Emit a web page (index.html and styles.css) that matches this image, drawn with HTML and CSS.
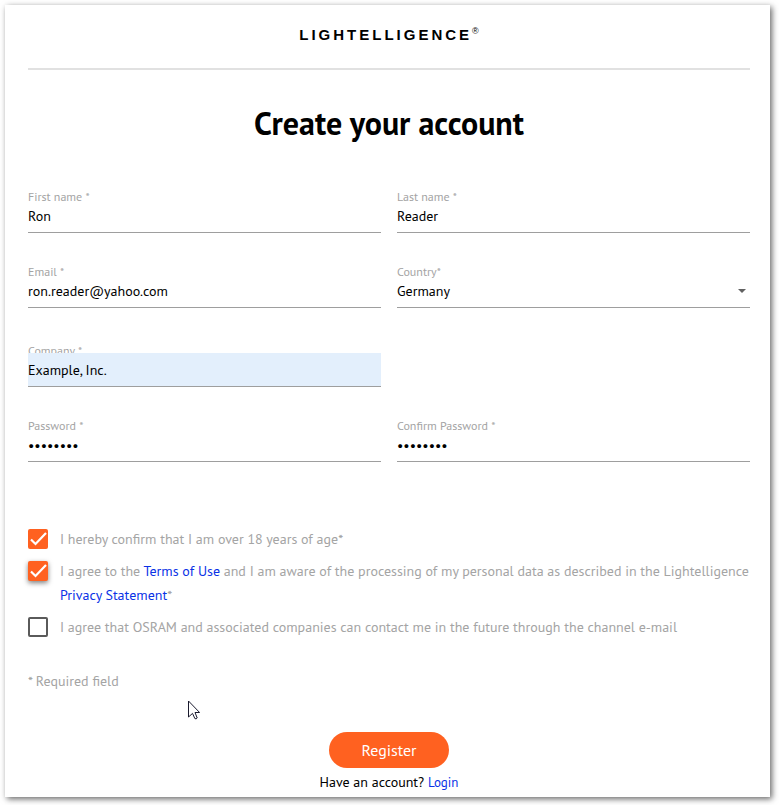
FILE: index.html
```html
<!DOCTYPE html>
<html lang="en">
<head>
<meta charset="utf-8">
<title>Create your account</title>
<meta name="viewport" content="width=device-width, initial-scale=1">
<link rel="stylesheet" href="styles.css">
</head>
<body>
<main class="card">
  <header class="header">
    <div class="logo">LIGHTELLIGENCE<sup class="logo-mark">®</sup></div>
  </header>
  <h1 class="title">Create your account</h1>
  <form class="form">
    <div class="fields">
      <div class="field">
        <label class="label" for="first">First name *</label>
        <input class="control" id="first" type="text" value="Ron">
      </div>
      <div class="field">
        <label class="label" for="last">Last name *</label>
        <input class="control" id="last" type="text" value="Reader">
      </div>
      <div class="field">
        <label class="label" for="email">Email *</label>
        <input class="control" id="email" type="email" value="ron.reader@yahoo.com">
      </div>
      <div class="field">
        <label class="label" for="country">Country*</label>
        <div class="select">
          <select class="control" id="country"><option>Germany</option></select>
          <svg class="arrow" viewBox="0 0 8 4" aria-hidden="true"><path d="M0 0h8L4 4z"/></svg>
        </div>
      </div>
      <div class="field field-company">
        <label class="label" for="company">Company *</label>
        <input class="control control-filled" id="company" type="text" value="Example, Inc.">
      </div>
      <div class="field">
        <label class="label" for="password">Password *</label>
        <input class="control" id="password" type="password" value="password">
      </div>
      <div class="field">
        <label class="label" for="confirm">Confirm Password *</label>
        <input class="control" id="confirm" type="password" value="password">
      </div>
    </div>
    <div class="consents">
      <div class="consent">
        <input class="check" id="age" type="checkbox" checked>
        <label for="age">I hereby confirm that I am over 18 years of age*</label>
      </div>
      <div class="consent">
        <input class="check check-raised" id="terms" type="checkbox" checked>
        <label for="terms">I agree to the <a href="#terms">Terms of Use</a> and I am aware of the processing of my personal data as described in the Lightelligence <a href="#privacy">Privacy Statement</a>*</label>
      </div>
      <div class="consent">
        <input class="check" id="contact" type="checkbox">
        <label for="contact">I agree that OSRAM and associated companies can contact me in the future through the channel e-mail</label>
      </div>
    </div>
    <p class="required">* Required field</p>
    <button class="register" type="submit">Register</button>
    <p class="login">Have an account? <a class="login-link" href="#login">Login</a></p>
  </form>
</main>
<svg class="cursor" viewBox="0 0 12 20" aria-hidden="true"><path d="M.5 1v16l4-3.600 2.400 5.200q1.300.8 2.300-.6L7 12.500h4.600z"/></svg>
</body>
</html>
```
FILE: styles.css
```css
* {
  box-sizing: border-box;
}

body {
  margin: 0;
  padding: 5px 9px 9px 5px;
  background: #fff;
  color: #000;
  font: 14px/24px "PT Sans", "Noto Sans", sans-serif;
}

a {
  color: #0a32e6;
  text-decoration: none;
}

.card {
  padding: 0 20px 2px 23px;
  background: #fff;
  box-shadow: 2px 2px 6px rgba(0, 0, 0, 0.6);
}

.header {
  display: flex;
  justify-content: center;
  height: 65px;
  padding-top: 18px;
  border-bottom: 2px solid #e1e1e1;
}

.logo {
  font: bold 15px/24px "Liberation Sans", Arial, sans-serif;
  letter-spacing: 3px;
}

.logo-mark {
  font-size: 9px;
  font-weight: normal;
  line-height: 0;
  letter-spacing: 0;
}

.title {
  margin: 33px 0 46px;
  font-size: 32px;
  line-height: 40px;
  text-align: center;
}

.form {
  display: flex;
  flex-direction: column;
}

.fields {
  display: grid;
  grid-template-columns: 1fr 1fr;
  gap: 31px 16px;
}

.field {
  display: flex;
  flex-direction: column;
  min-width: 0;
}

.field-company {
  grid-column: 1 / 2;
  margin-top: 4px;
}

.field-company + .field {
  grid-column: 1 / 2;
}

.label {
  color: #a4a4a4;
  font-size: 12px;
  line-height: 16px;
}

.control {
  position: relative;
  width: 100%;
  height: 34px;
  margin: -6px 0 0;
  padding: 0;
  border: 0;
  border-bottom: 1px solid #9e9e9e;
  border-radius: 0;
  outline: 0;
  background: transparent;
  color: #000;
  font: inherit;
  appearance: none;
}

.control-filled {
  background: #e3effc;
}

.select {
  display: grid;
  align-items: center;
}

.select > * {
  grid-area: 1 / 1;
}

.arrow {
  justify-self: end;
  width: 8px;
  height: 4px;
  margin: 0 4px 6px 0;
  fill: #616161;
  pointer-events: none;
}

.consents {
  display: grid;
  gap: 8px;
  margin-top: 65px;
  color: #a4a4a4;
}

.consent {
  display: flex;
  gap: 12px;
}

.check {
  flex: none;
  width: 20px;
  height: 20px;
  margin: 2px 0 0;
  border: 2px solid #5a5a5a;
  border-radius: 2px;
  appearance: none;
}

.check:checked {
  border: 0;
  background: #ff6120 url("data:image/svg+xml,%3Csvg xmlns='http://www.w3.org/2000/svg' viewBox='0 0 20 20'%3E%3Cpath d='M3 10.500l4.500 4.500L18 4' fill='none' stroke='white' stroke-width='2.200'/%3E%3C/svg%3E");
}

.check-raised {
  box-shadow: 0 2px 5px rgba(0, 0, 0, 0.5);
}

.required {
  margin: 30px 0 39px;
  color: #a4a4a4;
}

.register {
  align-self: center;
  width: 120px;
  height: 36px;
  padding: 0;
  border: 0;
  border-radius: 18px;
  background: #ff6120;
  color: #fff;
  font: inherit;
  font-size: 16px;
}

.login {
  margin: 2px 0 0;
  text-align: center;
}

.login-link {
  font-size: 13px;
}

.cursor {
  position: absolute;
  top: 700px;
  left: 188px;
  width: 12px;
  height: 20px;
  fill: #fff;
  stroke: #1a1a2e;
  pointer-events: none;
}
```
